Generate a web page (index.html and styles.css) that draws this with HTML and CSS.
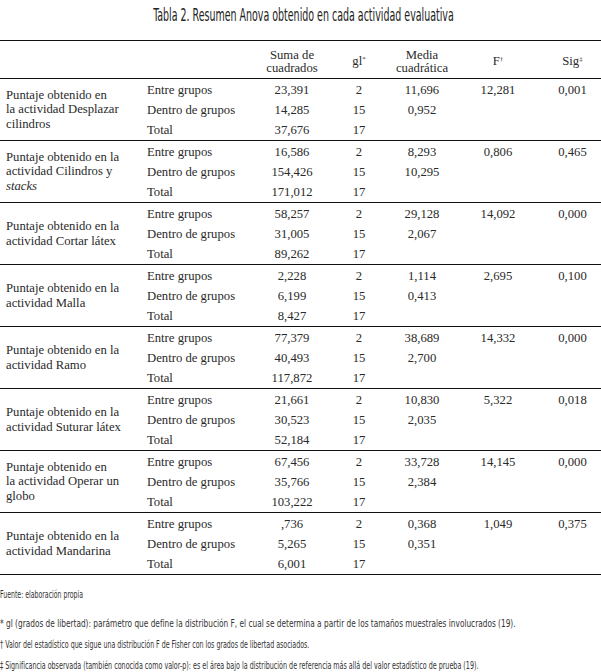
FILE: index.html
```html
<!DOCTYPE html>
<html lang="es">
<head>
<meta charset="utf-8">
<title>Tabla 2. Resumen Anova</title>
<link rel="stylesheet" href="styles.css">
</head>
<body>
<div class="title"><span>Tabla 2. Resumen Anova obtenido en cada actividad evaluativa</span></div>
<table class="anova">
  <colgroup>
    <col class="c-label"><col class="c-sub"><col class="c-suma"><col class="c-gl"><col class="c-media"><col class="c-f"><col class="c-sig">
  </colgroup>
  <thead>
    <tr>
      <th></th><th></th>
      <th>Suma de<br>cuadrados</th>
      <th>gl<sup>*</sup></th>
      <th>Media<br>cuadrática</th>
      <th>F<sup>†</sup></th>
      <th>Sig<sup>‡</sup></th>
    </tr>
  </thead>
  <tbody>
    <tr class="first"><td class="label" rowspan="3">Puntaje obtenido en<br>la actividad Desplazar<br>cilindros</td><td class="sub">Entre grupos</td><td>23,391</td><td>2</td><td>11,696</td><td>12,281</td><td>0,001</td></tr>
    <tr><td class="sub">Dentro de grupos</td><td>14,285</td><td>15</td><td>0,952</td><td></td><td></td></tr>
    <tr><td class="sub">Total</td><td>37,676</td><td>17</td><td></td><td></td><td></td></tr>

    <tr class="first"><td class="label" rowspan="3">Puntaje obtenido en la<br>actividad Cilindros y<br><em>stacks</em></td><td class="sub">Entre grupos</td><td>16,586</td><td>2</td><td>8,293</td><td>0,806</td><td>0,465</td></tr>
    <tr><td class="sub">Dentro de grupos</td><td>154,426</td><td>15</td><td>10,295</td><td></td><td></td></tr>
    <tr><td class="sub">Total</td><td>171,012</td><td>17</td><td></td><td></td><td></td></tr>

    <tr class="first"><td class="label" rowspan="3">Puntaje obtenido en la<br>actividad Cortar látex</td><td class="sub">Entre grupos</td><td>58,257</td><td>2</td><td>29,128</td><td>14,092</td><td>0,000</td></tr>
    <tr><td class="sub">Dentro de grupos</td><td>31,005</td><td>15</td><td>2,067</td><td></td><td></td></tr>
    <tr><td class="sub">Total</td><td>89,262</td><td>17</td><td></td><td></td><td></td></tr>

    <tr class="first"><td class="label" rowspan="3">Puntaje obtenido en la<br>actividad Malla</td><td class="sub">Entre grupos</td><td>2,228</td><td>2</td><td>1,114</td><td>2,695</td><td>0,100</td></tr>
    <tr><td class="sub">Dentro de grupos</td><td>6,199</td><td>15</td><td>0,413</td><td></td><td></td></tr>
    <tr><td class="sub">Total</td><td>8,427</td><td>17</td><td></td><td></td><td></td></tr>

    <tr class="first"><td class="label" rowspan="3">Puntaje obtenido en la<br>actividad Ramo</td><td class="sub">Entre grupos</td><td>77,379</td><td>2</td><td>38,689</td><td>14,332</td><td>0,000</td></tr>
    <tr><td class="sub">Dentro de grupos</td><td>40,493</td><td>15</td><td>2,700</td><td></td><td></td></tr>
    <tr><td class="sub">Total</td><td>117,872</td><td>17</td><td></td><td></td><td></td></tr>

    <tr class="first"><td class="label" rowspan="3">Puntaje obtenido en la<br>actividad Suturar látex</td><td class="sub">Entre grupos</td><td>21,661</td><td>2</td><td>10,830</td><td>5,322</td><td>0,018</td></tr>
    <tr><td class="sub">Dentro de grupos</td><td>30,523</td><td>15</td><td>2,035</td><td></td><td></td></tr>
    <tr><td class="sub">Total</td><td>52,184</td><td>17</td><td></td><td></td><td></td></tr>

    <tr class="first"><td class="label" rowspan="3">Puntaje obtenido en<br>la actividad Operar un<br>globo</td><td class="sub">Entre grupos</td><td>67,456</td><td>2</td><td>33,728</td><td>14,145</td><td>0,000</td></tr>
    <tr><td class="sub">Dentro de grupos</td><td>35,766</td><td>15</td><td>2,384</td><td></td><td></td></tr>
    <tr><td class="sub">Total</td><td>103,222</td><td>17</td><td></td><td></td><td></td></tr>

    <tr class="first"><td class="label" rowspan="3">Puntaje obtenido en la<br>actividad Mandarina</td><td class="sub">Entre grupos</td><td>,736</td><td>2</td><td>0,368</td><td>1,049</td><td>0,375</td></tr>
    <tr><td class="sub">Dentro de grupos</td><td>5,265</td><td>15</td><td>0,351</td><td></td><td></td></tr>
    <tr><td class="sub">Total</td><td>6,001</td><td>17</td><td></td><td></td><td></td></tr>
  </tbody>
</table>
<div class="notes">
  <p class="note n-src">Fuente: elaboración propia</p>
  <p class="note n-gl">* gl (grados de libertad): parámetro que define la distribución F, el cual se determina a partir de los tamaños muestrales involucrados (19).</p>
  <p class="note n-f">† Valor del estadístico que sigue una distribución F de Fisher con los grados de libertad asociados.</p>
  <p class="note n-sig">‡ Significancia observada (también conocida como valor-p): es el área bajo la distribución de referencia más allá del valor estadístico de prueba (19).</p>
</div>
</body>
</html>
```
FILE: styles.css
```css
html, body {
  margin: 0;
  padding: 0;
  background: #ffffff;
  overflow: hidden;
}

body {
  width: 601px;
  color: #2c2c2c;
  font-family: "Liberation Serif", "Times New Roman", serif;
}

.title {
  display: flex;
  justify-content: center;
  height: 40px;
  padding-top: 5px;
  padding-left: 5px;
  box-sizing: border-box;
}

.title span {
  display: inline-block;
  white-space: nowrap;
  font-family: "DejaVu Sans Condensed", "DejaVu Sans", sans-serif;
  font-stretch: condensed;
  font-size: 17px;
  line-height: 20px;
  color: #222;
  transform: scaleX(0.62);
}

.anova {
  width: 601px;
  border-collapse: collapse;
  table-layout: fixed;
  font-size: 12.7px;
  color: #2a2a2a;
}

.c-label { width: 143px; }
.c-sub { width: 115px; }
.c-suma { width: 68px; }
.c-gl { width: 66px; }
.c-media { width: 60px; }
.c-f { width: 92px; }
.c-sig { width: 57px; }

.anova thead tr {
  border-top: 1px solid #111;
  border-bottom: 1px solid #111;
}

.anova th {
  height: 33px;
  padding: 4px 0 0;
  font-weight: normal;
  text-align: center;
  line-height: 12.5px;
  white-space: nowrap;
  vertical-align: middle;
}

.anova sup {
  font-size: 7px;
  vertical-align: top;
  line-height: 7px;
  position: relative;
  top: 1px;
}

.anova td {
  height: 20px;
  padding: 0;
  text-align: center;
  line-height: 16px;
  white-space: nowrap;
  vertical-align: middle;
}

.anova tr.first td {
  height: 21px;
}

.anova tr.first {
  border-top: 1px solid #111;
}

.anova tbody tr:last-child {
  border-bottom: 1px solid #111;
}

.anova td.label {
  text-align: left;
  padding-left: 6px;
  line-height: 14.5px;
}

.anova td.sub {
  text-align: left;
  padding-left: 4px;
}

.notes {
  padding-top: 14px;
}

.note {
  margin: 0 0 9px;
  width: max-content;
  white-space: nowrap;
  font-family: "DejaVu Sans Condensed", "DejaVu Sans", sans-serif;
  font-stretch: condensed;
  font-size: 10px;
  line-height: 12px;
  color: #333;
  transform: scaleX(0.74);
  transform-origin: left center;
}

.note.n-src {
  margin-bottom: 17px;
  transform: scaleX(0.69);
}

.note.n-gl { transform: scaleX(0.82); }
.note.n-f { transform: scaleX(0.7); }
.note.n-sig { transform: scaleX(0.71); }
```
